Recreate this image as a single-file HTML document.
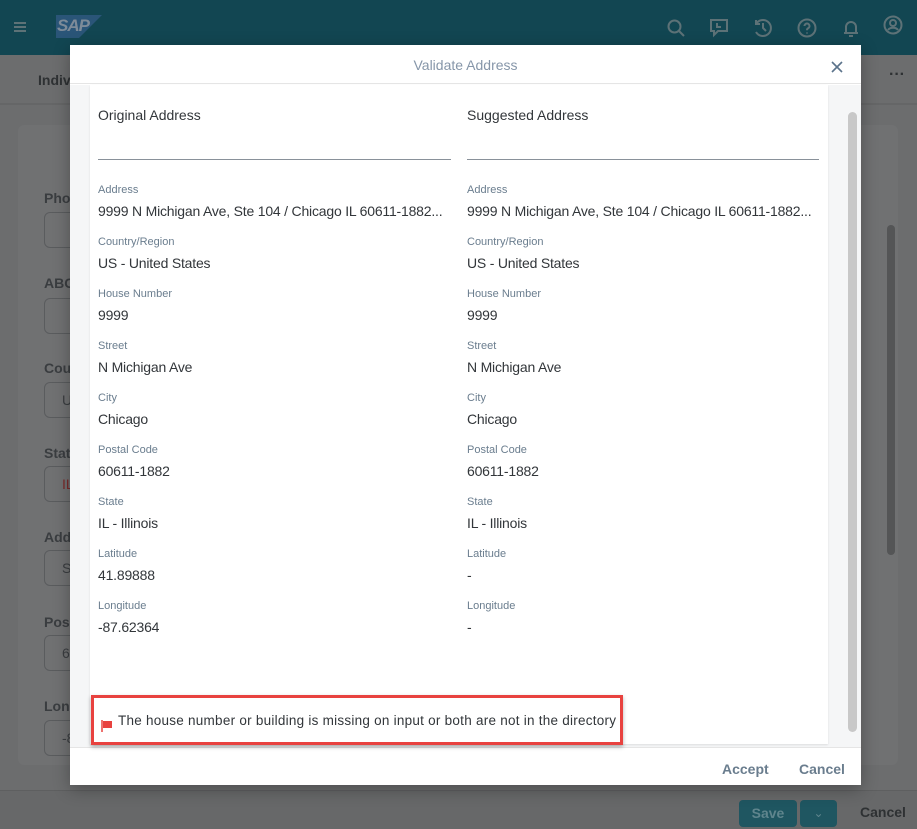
<!DOCTYPE html>
<html><head><meta charset="utf-8"><style>
*{box-sizing:border-box;margin:0;padding:0}
body{width:917px;height:829px;overflow:hidden;position:relative;background:#6a6b6c;font-family:"Liberation Sans",sans-serif}
.shell{position:absolute;left:0;top:0;width:917px;height:55px;background:#124652}
.ic{position:absolute;top:18px}
.bgpage{position:absolute;left:0;top:55px;width:917px;height:735px;background:#6c6d6e}
.card{position:absolute;left:18px;top:125px;width:880px;height:640px;background:#707172;border-radius:6px}
.lbl{position:absolute;left:44px;font-size:14px;font-weight:bold;color:#3a3d40}
.inp{position:absolute;left:44px;width:60px;height:36px;border:1px solid #5a5c5e;border-radius:6px;background:#707172;font-size:14px;color:#3a3d40;padding:9px 0 0 17px}
.botbar{position:absolute;left:0;top:790px;width:917px;height:39px;background:#676869;border-top:1px solid #5e5f60}
.dlg{position:absolute;left:70px;top:45px;width:791px;height:740px;background:#fff;box-shadow:0 4px 16px rgba(0,0,0,.3)}
.hdr{height:39px;border-bottom:1px solid #e5e5e5;text-align:center;font-size:14px;color:#8696a9;line-height:40px}
.cont{position:absolute;left:0;top:40px;width:791px;height:662px;background:#f5f6f7}
.panel{position:absolute;left:20px;top:0;width:738px;height:659px;background:#fff;box-shadow:0 1px 2px rgba(0,0,0,.1)}
.col{position:absolute;top:0;width:353px}
.h{position:absolute;top:22px;font-size:14px;color:#32363a}
.rule{position:absolute;top:74px;left:0;width:353px;border-top:1px solid #89919a}
.f{position:absolute;left:0;width:353px}
.f .l{font-size:11px;color:#6a7d8e;height:19px}
.f .v{font-size:14px;color:#32363a;white-space:nowrap;overflow:hidden;text-overflow:ellipsis;letter-spacing:-.2px}
.sb{position:absolute;left:778px;top:27px;width:9px;height:620px;background:#c8c8c8;border-radius:5px}
.msg{position:absolute;left:91px;top:695px;width:532px;height:50px;border:3px solid #e8423f;box-shadow:0 2px 4px rgba(0,0,0,.3);background:#fff;font-size:13.5px;letter-spacing:.25px;color:#32363a;padding:15px 0 0 24px;white-space:nowrap}
.ftr{position:absolute;left:0;top:702px;width:791px;height:38px;border-top:1px solid #e5e5e5}
.btn{position:absolute;top:13px;font-size:14px;font-weight:bold;color:#6a7d8e}
</style></head><body>
<div class="shell">
<div style="position:absolute;left:14px;top:22px;width:12px;height:2px;background:#5d7277;box-shadow:0 4px 0 #5d7277,0 8px 0 #5d7277"></div>
<div style="position:absolute;left:56px;top:15px;width:46px;height:23px;background:#2a5578;clip-path:polygon(0 0,100% 0,50% 100%,0 100%)"></div>
<div style="position:absolute;left:57px;top:16px;font-size:17px;font-weight:bold;color:#7d8b99;letter-spacing:-1px;font-style:italic">SAP</div>
<svg class="ic" style="left:666px" width="20" height="20" viewBox="0 0 20 20" fill="none" stroke="#5d7277" stroke-width="2"><circle cx="8.5" cy="8.5" r="6"/><path d="M13 13l5 5"/></svg>
<svg class="ic" style="left:709px" width="20" height="20" viewBox="0 0 20 20" fill="none" stroke="#5d7277" stroke-width="2"><path d="M2 2h16v11h-9l-4 4v-4H2z"/><path d="M8 5v4h4"/></svg>
<svg class="ic" style="left:753px" width="20" height="20" viewBox="0 0 20 20" fill="none" stroke="#5d7277" stroke-width="2"><path d="M3 6a8 8 0 1 1 0 8"/><path d="M3 2v4h4M10 5v5l3 3"/></svg>
<svg class="ic" style="left:797px" width="20" height="20" viewBox="0 0 20 20" fill="none" stroke="#5d7277" stroke-width="2"><circle cx="10" cy="10" r="8.5"/><path d="M7.5 8a2.5 2.5 0 1 1 3.5 2.3c-1 .5-1 1-1 2M10 14.5v1"/></svg>
<svg class="ic" style="left:841px" width="20" height="20" viewBox="0 0 20 20" fill="none" stroke="#5d7277" stroke-width="2"><path d="M5 15V9a5 5 0 0 1 10 0v6zM3 15h14M8 18h4"/></svg>
<svg class="ic" style="left:883px;top:15px" width="20" height="20" viewBox="0 0 20 20" fill="none" stroke="#5d7277" stroke-width="2"><circle cx="10" cy="10" r="8.5"/><circle cx="10" cy="8" r="3"/><path d="M5 15c2-3 8-3 10 0"/></svg>
</div>
<div class="bgpage">
<div style="position:absolute;left:38px;top:17px;font-size:14px;font-weight:bold;color:#2e3133">Indiv</div>
<div style="position:absolute;left:889px;top:11px;font-size:16px;font-weight:bold;color:#2e3133">···</div>
<div style="position:absolute;left:0;top:48px;width:917px;height:2px;background:#656667"></div>
</div>
<div class="card"></div>
<div style="position:absolute;left:887px;top:225px;width:8px;height:330px;background:#545556;border-radius:4px"></div>
<div class="lbl" style="top:190px">Pho</div><div class="inp" style="top:212px"></div>
<div class="lbl" style="top:275px">ABC</div><div class="inp" style="top:298px"></div>
<div class="lbl" style="top:360px">Cou</div><div class="inp" style="top:382px">U</div>
<div class="lbl" style="top:445px">Stat</div><div class="inp" style="top:466px;color:#7a2a2a">IL</div>
<div class="lbl" style="top:529px">Add</div><div class="inp" style="top:550px">S</div>
<div class="lbl" style="top:614px">Pos</div><div class="inp" style="top:635px">6</div>
<div class="lbl" style="top:698px">Lon</div><div class="inp" style="top:720px">-8</div>
<div class="botbar">
<div style="position:absolute;left:739px;top:9px;width:58px;height:27px;background:#1f5661;border-radius:4px;color:#5f858d;font-weight:bold;font-size:14px;text-align:center;line-height:27px">Save</div>
<div style="position:absolute;left:800px;top:9px;width:37px;height:27px;background:#1f5661;border-radius:4px;color:#5f858d;font-size:12px;text-align:center;line-height:27px">⌄</div>
<div style="position:absolute;left:860px;top:13px;font-size:14px;font-weight:bold;color:#2e3133">Cancel</div>
</div>
<div class="dlg">
<div class="hdr">Validate Address</div>
<svg style="position:absolute;left:761px;top:16px" width="12" height="12" viewBox="0 0 12 12" stroke="#5b738b" stroke-width="1.6"><path d="M1 1l10 10M11 1L1 11"/></svg>
<div class="cont">
<div class="panel">
<div class="col" style="left:8px">
<div class="h">Original Address</div><div class="rule"></div>
<div class="f" style="top:99px"><div class="l">Address</div><div class="v">9999 N Michigan Ave, Ste 104 / Chicago IL 60611-1882...</div></div>
<div class="f" style="top:151px"><div class="l">Country/Region</div><div class="v">US - United States</div></div>
<div class="f" style="top:203px"><div class="l">House Number</div><div class="v">9999</div></div>
<div class="f" style="top:255px"><div class="l">Street</div><div class="v">N Michigan Ave</div></div>
<div class="f" style="top:307px"><div class="l">City</div><div class="v">Chicago</div></div>
<div class="f" style="top:359px"><div class="l">Postal Code</div><div class="v">60611-1882</div></div>
<div class="f" style="top:411px"><div class="l">State</div><div class="v">IL - Illinois</div></div>
<div class="f" style="top:463px"><div class="l">Latitude</div><div class="v">41.89888</div></div>
<div class="f" style="top:515px"><div class="l">Longitude</div><div class="v">-87.62364</div></div>
</div>
<div class="col" style="left:377px;width:352px">
<div class="h">Suggested Address</div><div class="rule" style="width:352px"></div>
<div class="f" style="top:99px"><div class="l">Address</div><div class="v">9999 N Michigan Ave, Ste 104 / Chicago IL 60611-1882...</div></div>
<div class="f" style="top:151px"><div class="l">Country/Region</div><div class="v">US - United States</div></div>
<div class="f" style="top:203px"><div class="l">House Number</div><div class="v">9999</div></div>
<div class="f" style="top:255px"><div class="l">Street</div><div class="v">N Michigan Ave</div></div>
<div class="f" style="top:307px"><div class="l">City</div><div class="v">Chicago</div></div>
<div class="f" style="top:359px"><div class="l">Postal Code</div><div class="v">60611-1882</div></div>
<div class="f" style="top:411px"><div class="l">State</div><div class="v">IL - Illinois</div></div>
<div class="f" style="top:463px"><div class="l">Latitude</div><div class="v">-</div></div>
<div class="f" style="top:515px"><div class="l">Longitude</div><div class="v">-</div></div>
</div>
</div>
<div class="sb"></div>
</div>
<div class="ftr">
<div class="btn" style="left:652px">Accept</div>
<div class="btn" style="left:729px">Cancel</div>
</div>
</div>
<div class="msg">
<svg style="position:absolute;left:7px;top:22px" width="12" height="12" viewBox="0 0 12 12"><path d="M1 0v12" stroke="#e8423f" stroke-width="1.5"/><path d="M2 1h9v7H2z" fill="#e8423f"/></svg>
The house number or building is missing on input or both are not in the directory</div>
</body></html>
